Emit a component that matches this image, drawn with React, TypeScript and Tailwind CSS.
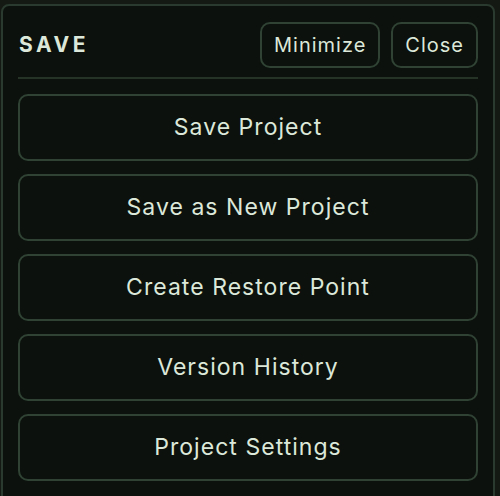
import React from 'react';

const actions = ['Save Project', 'Save as New Project', 'Create Restore Point', 'Version History', 'Project Settings'];

export default function App() {
  return (
    <div className="h-[496px] w-[500px] overflow-hidden bg-[#141914] pt-[4px] pl-[1px] font-['Inter',sans-serif] text-[#dce8d9]">
      <div className="h-[520px] w-[494px] rounded-[8px] border-2 border-[#2a3a2e] bg-[#0c110d] px-[15px] pt-[16px]">
        {/* Header */}
        <div className="flex h-[46px] items-center justify-between">
          <h2 className="pl-[1px] text-[21px] font-bold tracking-[0.17em]">SAVE</h2>
          <div className="flex gap-[11px]">
            <button className="h-[46px] rounded-[10px] border-2 border-[#2f4233] px-[12px] text-[20px] tracking-[0.05em]">
              Minimize
            </button>
            <button className="h-[46px] rounded-[10px] border-2 border-[#2f4233] px-[12px] text-[20px] tracking-[0.05em]">
              Close
            </button>
          </div>
        </div>

        <div className="mt-[9px] h-[2px] bg-[#253327]" />

        {/* Actions */}
        <div className="mt-[15px] flex flex-col gap-[13px]">
          {actions.map((label) => (
            <button
              key={label}
              className="h-[67px] rounded-[10px] border-2 border-[#2f4233] text-[23px] tracking-[0.045em]"
            >
              {label}
            </button>
          ))}
        </div>
      </div>
    </div>
  );
}
